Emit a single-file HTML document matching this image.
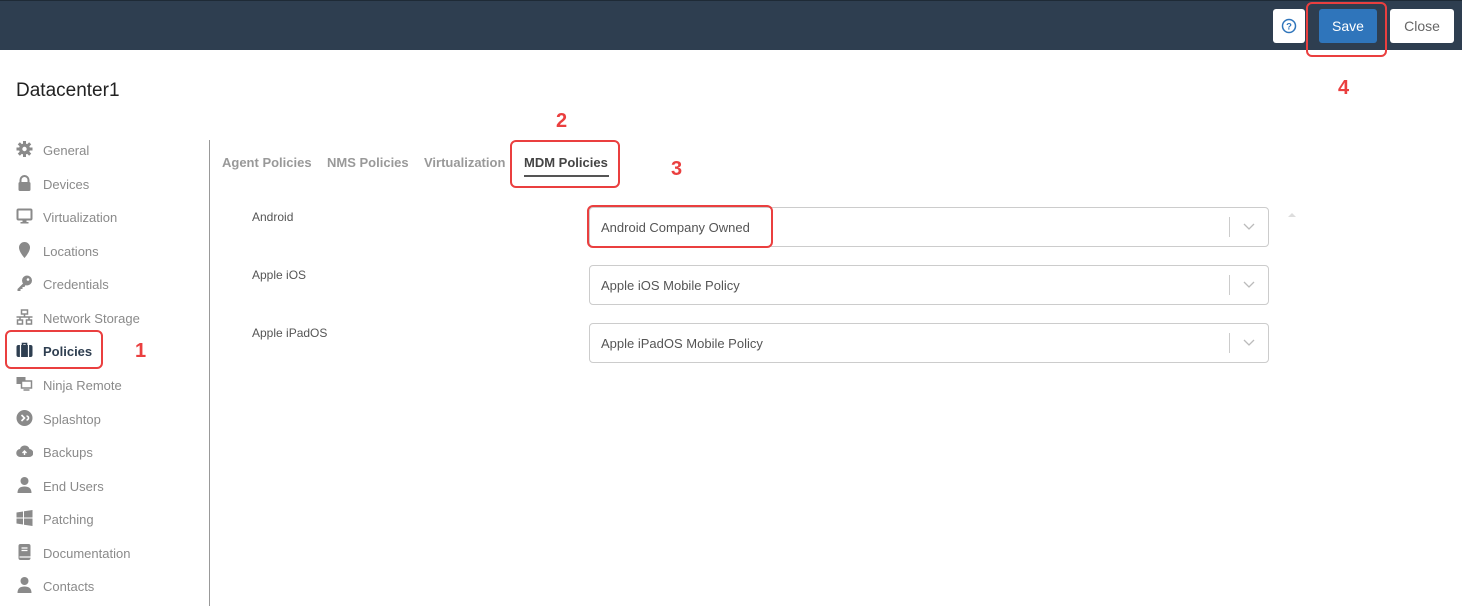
<!DOCTYPE html>
<html><head><meta charset="utf-8"><style>
*{margin:0;padding:0;box-sizing:border-box}
body{width:1462px;height:606px;overflow:hidden;background:#fff;font-family:"Liberation Sans",sans-serif;position:relative}
.hdr{position:absolute;left:0;top:0;width:1462px;height:50px;background:#2e3e50;border-top:1px solid #1e2a36}
.abs{position:absolute}
.btn{position:absolute;background:#fff;border-radius:3px;font-size:14px;color:#666;text-align:center}
.red{position:absolute;border:2px solid #ea3f3f;border-radius:6px}
.num{position:absolute;color:#ea3f3f;font-weight:bold;font-size:20px}
.nav{position:absolute;left:16px;font-size:13px;color:#8a8a8a;height:20px;line-height:20px}
.nav svg{position:absolute;left:0;top:1px}
.nav span{position:absolute;left:27px;top:1px;white-space:nowrap}
.tab{position:absolute;top:155px;font-size:13px;color:#999;font-weight:bold}
.lbl{position:absolute;left:252px;font-size:12px;color:#555}
.sel{position:absolute;left:589px;width:680px;height:40px;border:1px solid #ccc;border-radius:4px;font-size:13px;color:#555;line-height:40px;padding-left:11px}
.sel i{position:absolute;right:38px;top:9px;width:1px;height:20px;background:#ccc}
.sel svg{position:absolute;right:13px;top:15px}
</style></head><body>
<div class="hdr"></div>
<div class="btn" style="left:1273px;top:9px;width:32px;height:34px"><svg width="16" height="16" style="margin-top:9px" viewBox="0 0 16 16"><circle cx="8" cy="8" r="6.5" fill="none" stroke="#2f75bb" stroke-width="1.5"/><text x="8" y="11.5" font-size="9.5" font-weight="bold" text-anchor="middle" fill="#2f75bb" font-family="Liberation Sans">?</text></svg></div>
<div class="btn" style="left:1319px;top:9px;width:58px;height:34px;background:#2f75bb;color:#fff;line-height:34px;font-size:14px">Save</div>
<div class="btn" style="left:1390px;top:9px;width:64px;height:34px;line-height:34px">Close</div>
<div class="red" style="left:1306px;top:2px;width:81px;height:55px"></div>
<div class="num" style="left:1338px;top:77px">4</div>
<div class="abs" style="left:16px;top:80px;font-size:19px;color:#222">Datacenter1</div>

<div class="abs" style="left:209px;top:140px;width:1px;height:466px;background:#999"></div>

<div class="nav" style="top:140px"><svg width="17" height="16" viewBox="0 0 16 16"><circle cx="8" cy="8" r="5.5" fill="#8a8a8a"/><g stroke="#8a8a8a" stroke-width="3"><path d="M8 0v16M0 8h16M2.3 2.3l11.4 11.4M13.7 2.3L2.3 13.7"/></g><circle cx="8" cy="8" r="2.2" fill="#fff"/></svg><span>General</span></div>
<div class="nav" style="top:174px"><svg width="17" height="16" viewBox="0 0 16 16"><path d="M4 7V5a4 4 0 018 0v2" fill="none" stroke="#8a8a8a" stroke-width="2"/><rect x="2" y="7" width="12" height="9" rx="1.5" fill="#8a8a8a"/></svg><span>Devices</span></div>
<div class="nav" style="top:207px"><svg width="17" height="16" viewBox="0 0 16 16"><rect x="1" y="1.5" width="14" height="10" rx="1" fill="none" stroke="#8a8a8a" stroke-width="2"/><path d="M6 12h4v2H6zM4 14h8v1.5H4z" fill="#8a8a8a"/></svg><span>Virtualization</span></div>
<div class="nav" style="top:241px"><svg width="17" height="16" viewBox="0 0 16 16"><path d="M8 0a5.5 5.5 0 015.5 5.5C13.5 10 8 16 8 16S2.5 10 2.5 5.5A5.5 5.5 0 018 0z" fill="#8a8a8a"/></svg><span>Locations</span></div>
<div class="nav" style="top:274px"><svg width="17" height="16" viewBox="0 0 16 16"><circle cx="10.5" cy="5.5" r="5" fill="#8a8a8a"/><path d="M8 7L1 14v2h3v-2h2v-2h2l1-2z" fill="#8a8a8a"/><circle cx="11.5" cy="4.5" r="1.3" fill="#fff"/></svg><span>Credentials</span></div>
<div class="nav" style="top:308px"><svg width="17" height="16" viewBox="0 0 16 16"><g fill="none" stroke="#8a8a8a" stroke-width="1.5"><rect x="5" y="1" width="6" height="4"/><rect x="1" y="11" width="5" height="4"/><rect x="10" y="11" width="5" height="4"/><path d="M8 5v3M3.5 11V8h9v3M0 8h16"/></g></svg><span>Network Storage</span></div>
<div class="nav" style="top:341px;color:#2e3e50;font-weight:bold"><svg width="17" height="16" viewBox="0 0 16 16"><path d="M6 3V1.5h4V3" fill="none" stroke="#2e3e50" stroke-width="1.6"/><rect x="0" y="3" width="16" height="12" rx="2" fill="#2e3e50"/><path d="M4 3v12M12 3v12" stroke="#fff" stroke-width="1.2"/></svg><span>Policies</span></div>
<div class="red" style="left:5px;top:330px;width:98px;height:39px"></div>
<div class="num" style="left:135px;top:340px">1</div>
<div class="nav" style="top:375px"><svg width="17" height="16" viewBox="0 0 16 16"><rect x="0" y="1" width="9" height="7" fill="#8a8a8a"/><rect x="5" y="5" width="10" height="7" fill="#fff" stroke="#8a8a8a" stroke-width="1.5"/><path d="M7 14h6" stroke="#8a8a8a" stroke-width="1.5"/></svg><span>Ninja Remote</span></div>
<div class="nav" style="top:409px"><svg width="17" height="16" viewBox="0 0 16 16"><circle cx="8" cy="8" r="8" fill="#8a8a8a"/><path d="M5 5l3 3-3 3M10 6a2 2 0 110 4" fill="none" stroke="#fff" stroke-width="1.6"/></svg><span>Splashtop</span></div>
<div class="nav" style="top:442px"><svg width="17" height="16" viewBox="0 0 16 16"><path d="M4 14a4 4 0 01-.5-8A5 5 0 0113 6a4 4 0 01-.5 8z" fill="#8a8a8a"/><path d="M8 12V8M6 10l2-2 2 2" fill="none" stroke="#fff" stroke-width="1.4"/></svg><span>Backups</span></div>
<div class="nav" style="top:476px"><svg width="17" height="16" viewBox="0 0 16 16"><circle cx="8" cy="4" r="4" fill="#8a8a8a"/><path d="M1 16c0-5 3-6.5 7-6.5s7 1.5 7 6.5z" fill="#8a8a8a"/></svg><span>End Users</span></div>
<div class="nav" style="top:509px"><svg width="17" height="16" viewBox="0 0 16 16"><path d="M0 2.5l6.5-1v6H0zM7.5 1.3L16 0v7.5H7.5zM0 8.5h6.5v6L0 13.5zM7.5 8.5H16V16l-8.5-1.3z" fill="#8a8a8a"/></svg><span>Patching</span></div>
<div class="nav" style="top:543px"><svg width="17" height="16" viewBox="0 0 16 16"><rect x="2" y="0" width="12" height="16" rx="2" fill="#8a8a8a"/><path d="M5 4h6M5 6.5h6" stroke="#fff" stroke-width="1.2"/><path d="M3 13h11" stroke="#fff" stroke-width="1.2"/></svg><span>Documentation</span></div>
<div class="nav" style="top:576px"><svg width="17" height="16" viewBox="0 0 16 16"><circle cx="8" cy="4" r="4" fill="#8a8a8a"/><path d="M1 16c0-5 3-6.5 7-6.5s7 1.5 7 6.5z" fill="#8a8a8a"/></svg><span>Contacts</span></div>

<div class="tab" style="left:222px">Agent Policies</div>
<div class="tab" style="left:327px">NMS Policies</div>
<div class="tab" style="left:424px">Virtualization</div>
<div class="tab" style="left:524px;color:#444">MDM Policies</div>
<div class="abs" style="left:524px;top:175px;width:85px;height:2px;background:#555"></div>
<div class="red" style="left:510px;top:140px;width:110px;height:48px"></div>
<div class="num" style="left:556px;top:110px">2</div>
<div class="num" style="left:671px;top:158px">3</div>

<div class="lbl" style="top:210px">Android</div>
<div class="lbl" style="top:268px">Apple iOS</div>
<div class="lbl" style="top:326px">Apple iPadOS</div>
<div class="sel" style="top:207px">Android Company Owned<i></i><svg width="12" height="8" viewBox="0 0 12 8"><path d="M1 1l5 5 5-5" fill="none" stroke="#bbb" stroke-width="1.3"/></svg></div>
<div class="sel" style="top:265px">Apple iOS Mobile Policy<i></i><svg width="12" height="8" viewBox="0 0 12 8"><path d="M1 1l5 5 5-5" fill="none" stroke="#bbb" stroke-width="1.3"/></svg></div>
<div class="sel" style="top:323px">Apple iPadOS Mobile Policy<i></i><svg width="12" height="8" viewBox="0 0 12 8"><path d="M1 1l5 5 5-5" fill="none" stroke="#bbb" stroke-width="1.3"/></svg></div>
<div class="red" style="left:587px;top:205px;width:186px;height:43px"></div>
<svg class="abs" style="left:1287px;top:212px" width="10" height="6" viewBox="0 0 10 6"><path d="M1 5l4-4 4 4z" fill="#ddd"/></svg>
</body></html>
